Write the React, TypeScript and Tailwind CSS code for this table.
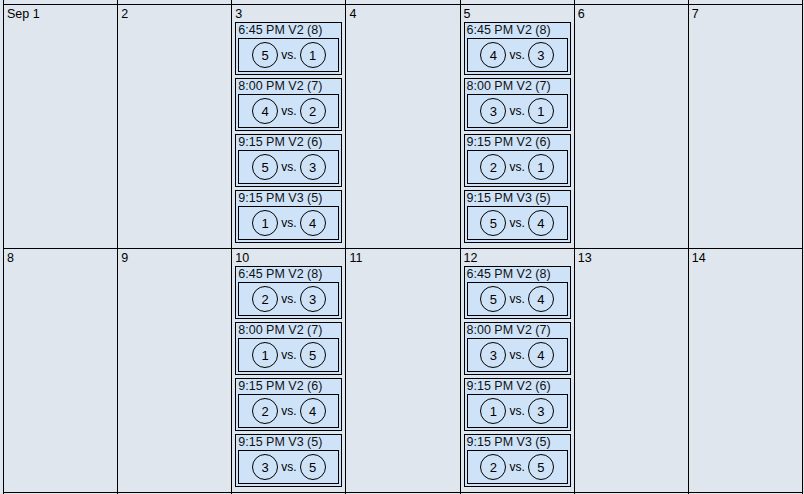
type Game = { time: string; a: number; b: number };

const slots = ["6:45 PM V2 (8)", "8:00 PM V2 (7)", "9:15 PM V2 (6)", "9:15 PM V3 (5)"];

const mk = (pairs: [number, number][]): Game[] =>
  pairs.map(([a, b], i) => ({ time: slots[i], a, b }));

const weeks: { label: string; games?: Game[] }[][] = [
  [
    { label: "Sep 1" },
    { label: "2" },
    { label: "3", games: mk([[5, 1], [4, 2], [5, 3], [1, 4]]) },
    { label: "4" },
    { label: "5", games: mk([[4, 3], [3, 1], [2, 1], [5, 4]]) },
    { label: "6" },
    { label: "7" },
  ],
  [
    { label: "8" },
    { label: "9" },
    { label: "10", games: mk([[2, 3], [1, 5], [2, 4], [3, 5]]) },
    { label: "11" },
    { label: "12", games: mk([[5, 4], [3, 4], [1, 3], [2, 5]]) },
    { label: "13" },
    { label: "14" },
  ],
];

function Team({ n }: { n: number }) {
  return (
    <div className="w-[26px] h-[26px] rounded-full border border-black flex items-center justify-center text-[13px] leading-none">
      {n}
    </div>
  );
}

function GameBox({ game }: { game: Game }) {
  return (
    <div className="border border-black bg-[#cfe3f8] px-[2px] pb-[2px] mb-[3px]">
      <div className="text-[12.5px] leading-[15px] text-[#111] whitespace-nowrap">{game.time}</div>
      <div className="border border-black h-[34px] flex items-center justify-center gap-[3px]">
        <Team n={game.a} />
        <span className="text-[12px] leading-none">vs.</span>
        <Team n={game.b} />
      </div>
    </div>
  );
}

export default function App() {
  return (
    <div
      className="w-[804px] h-[494px] overflow-hidden bg-[#dfe6ee] text-black"
      style={{ fontFamily: '"Liberation Sans", Arial, sans-serif' }}
    >
      <div className="ml-[3px] w-[800px] border-r border-black">
        {/* tail of previous week, scrolled off */}
        <div className="grid grid-cols-7 h-[4px]">
          {Array.from({ length: 7 }).map((_, i) => (
            <div key={i} className="border-l border-black" />
          ))}
        </div>
        {weeks.map((week, wi) => (
          <div key={wi} className="grid grid-cols-7">
            {week.map((day) => (
              <div
                key={day.label}
                className="h-[244px] border-l border-t border-black px-[3px] pt-[1px] overflow-hidden"
              >
                <div className="text-[12.5px] leading-[16px]">{day.label}</div>
                {day.games?.map((g, i) => (
                  <GameBox key={i} game={g} />
                ))}
              </div>
            ))}
          </div>
        ))}
        <div className="grid grid-cols-7 h-[10px]">
          {Array.from({ length: 7 }).map((_, i) => (
            <div key={i} className="border-l border-t border-black" />
          ))}
        </div>
      </div>
    </div>
  );
}
